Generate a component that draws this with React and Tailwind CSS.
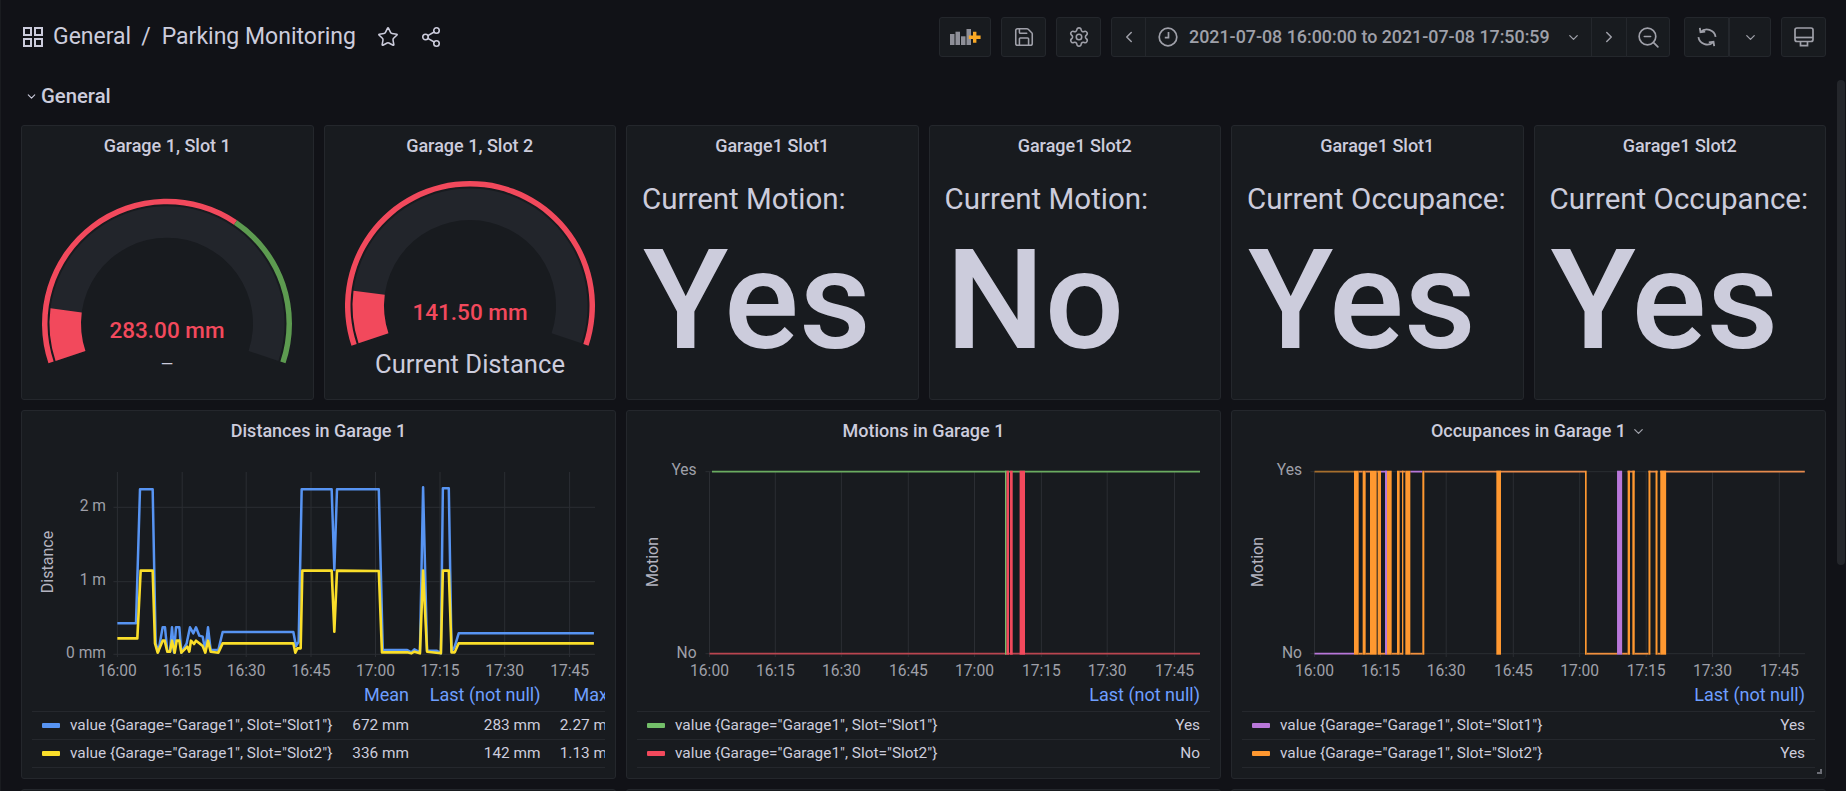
import React from "react";
import { ChevronDown, ChevronLeft, ChevronRight, Star, Share2, Settings, ZoomOut, Save } from "lucide-react";

const GREY = "#9fa0a9";
const GRID = "#2b2e33";

function polar(cx, cy, r, a) {
  const t = (a * Math.PI) / 180;
  return [cx + r * Math.cos(t), cy + r * Math.sin(t)];
}
function band(cx, cy, r0, r1, a0, a1) {
  const large = a1 - a0 > 180 ? 1 : 0;
  const [x0, y0] = polar(cx, cy, r1, a0);
  const [x1, y1] = polar(cx, cy, r1, a1);
  const [x2, y2] = polar(cx, cy, r0, a1);
  const [x3, y3] = polar(cx, cy, r0, a0);
  return `M${x0} ${y0}A${r1} ${r1} 0 ${large} 1 ${x1} ${y1}L${x2} ${y2}A${r0} ${r0} 0 ${large} 0 ${x3} ${y3}Z`;
}

function Gauge({ cx, cy, thresholds, value, sub, subSize, subY, valueY }) {
  const A0 = 161.5;
  const A1 = 378.5;
  return (
    <svg width="290" height="232" viewBox="0 42 290 232" className="block self-center">
      {thresholds.map(([a, b, c]) => (
        <path key={c} d={band(cx, cy, 119.5, 125, A0 + a * 217, A0 + b * 217)} fill={c} />
      ))}
      <path d={band(cx, cy, 86, 117.5, A0, A1)} fill="#22252b" />
      <path d={band(cx, cy, 86, 117.5, A0, A0 + 26)} fill="#f2495c" />
      <text x={cx} y={valueY} textAnchor="middle" fill="#f2495c" fontSize="22.5" fontWeight="500">{value}</text>
      <text x={cx} y={subY} textAnchor="middle" fill="#ccccdc" fontSize={subSize}>{sub}</text>
    </svg>
  );
}

function Panel({ title, children, chevron, className = "" }) {
  return (
    <div className={`flex flex-col overflow-hidden rounded-[3px] border border-[#24272c] bg-[#181b1f] ${className}`}>
      <div className="flex h-[41px] shrink-0 items-center justify-center pb-[2px] text-[18px] font-medium text-[#ccccdc]">
        <span className="relative">
          {title}
          {chevron && <ChevronDown size={15} color={GREY} className="absolute left-full top-[7px] ml-[5px]" />}
        </span>
      </div>
      {children}
    </div>
  );
}

function Stat({ title, label, value }) {
  return (
    <Panel title={title} className="h-[275px]">
      <div className="pl-[15px] pt-[10px] text-[29.5px] leading-[44px] text-[#ccccdc] whitespace-nowrap">{label}</div>
      <div className="mt-[4px] pl-[16px] text-[140px] leading-[150px] font-medium text-[#ccccdc]">{value}</div>
    </Panel>
  );
}

const TIMES = ["16:00", "16:15", "16:30", "16:45", "17:00", "17:15", "17:30", "17:45"];

function Chart({ px, xs, endX, yLabels, hLines, axisTitle, axisX, labelX, children }) {
  return (
    <svg width="593" height="228" viewBox={`${px + 1} 452 593 228`} className="block shrink-0">
      {xs.map((x) => (
        <line key={x} x1={x} x2={x} y1={472} y2={657} stroke={GRID} strokeWidth="1" />
      ))}
      {hLines.map((y) => (
        <line key={y} x1={xs[0] - 4} x2={endX} y1={y} y2={y} stroke={GRID} strokeWidth="1" />
      ))}
      {children}
      {TIMES.map((t, i) => (
        <text key={t} x={xs[i]} y={676} textAnchor="middle" fill={GREY} fontSize="15.6">{t}</text>
      ))}
      {yLabels.map(([t, y]) => (
        <text key={t} x={labelX} y={y + 4.5} textAnchor="end" fill={GREY} fontSize="15.6">{t}</text>
      ))}
      <text transform={`translate(${axisX} 562) rotate(-90)`} textAnchor="middle" fill="#b3b3bf" fontSize="16" y="5">{axisTitle}</text>
    </svg>
  );
}

function Legend({ rows, columns, grid }) {
  return (
    <div className="mx-[10px] overflow-hidden">
      <div className={`grid ${grid} h-[31px] items-center pb-[2px] text-[18px] text-[#6e9fff] whitespace-nowrap`}>
        <span />
        {columns.map((c) => (
          <span key={c} className={c === "Max" ? "pl-[33px]" : "text-right"}>{c}</span>
        ))}
      </div>
      {rows.map((r) => (
        <div key={r.name} className={`grid ${grid} h-[28px] items-center border-t border-[#25282d] text-[15.4px] text-[#ccccdc] whitespace-nowrap`}>
          <span className="flex items-center gap-[10px] pl-[10px]">
            <i className="block h-[5px] w-[18px] shrink-0 rounded-[1px]" style={{ background: r.color }} />
            {r.name}
          </span>
          {r.values.map((v, i) => (
            <span key={i} className="text-right">{v}</span>
          ))}
        </div>
      ))}
      <div className="border-t border-[#25282d]" />
    </div>
  );
}

const z11 = (pts) => pts.map(([x, y]) => `${90 + x / 3},${470 + y / 3}`);
const z3 = (pts) => pts.map(([x, y]) => `${x / 2.529},${400 + y / 3}`);

const BLUE = [
  ...z11([[82,460],[138,460],[150,58],[188,58],[197,520],[205,545],[218,472],[225,472],[232,545],[240,545],[246,472],[252,548],[258,472],[268,472],[274,548],[290,520],[300,472],[310,490],[318,472],[328,497],[338,500],[346,540],[354,472],[362,540],[385,540],[398,486],[610,486],[618,528],[626,515],[635,58],[725,58],[733,300],[741,58]]),
  ...z3([[958,268],[968,750],[1030,750],[1040,757],[1048,748],[1062,757],[1070,262],[1080,752],[1105,752],[1115,760],[1120,265],[1135,265],[1142,755],[1150,740],[1160,700],[1502,700]]),
].join(" ");
const YELLOW = [
  ...z11([[82,505],[142,505],[152,302],[188,302],[195,520],[203,548],[218,512],[224,512],[232,545],[240,545],[246,512],[254,548],[260,512],[268,512],[274,548],[292,530],[298,545],[303,512],[312,522],[318,512],[328,520],[338,528],[346,548],[354,512],[362,545],[385,548],[398,520],[610,520],[616,548],[622,535],[632,535],[637,302],[725,302],[733,485],[741,302]]),
  ...z3([[958,513],[966,757],[1030,757],[1040,760],[1048,755],[1062,760],[1070,512],[1080,755],[1115,760],[1120,512],[1135,512],[1142,757],[1150,757],[1160,730],[1502,730]]),
].join(" ");

const X1 = [117.4, 182.2, 246.2, 311, 375.5, 440, 504.7, 569.6];
const X2 = [709.5, 775.3, 841.4, 908.3, 974.5, 1041.4, 1107.2, 1174.5];
const X3 = [1314.5, 1380.5, 1446.2, 1513.3, 1579.7, 1646.2, 1712.5, 1779.3];
const YES = 471.7;
const NO = 653.7;

const z12 = (x) => 1300 + x / 3;
const z5 = (x) => 1230 + x / 2.545;
const ORANGE_BARS = [
  [z12(162), z12(176)], [z12(188), z12(197)], [z12(210), z12(230)], [z12(233), z12(243)],
  [z12(261), z12(275)], [z12(291), z12(299)], [z12(306), z12(310)], [z12(316), z12(331)],
  [z12(367), z12(373)], [z12(589), z12(603)], [z12(855), z12(860)],
  [z5(1012), z5(1018)], [z5(1024), z5(1030)], [z5(1065), z5(1070)], [z5(1083), z5(1088)], [z5(1095), z5(1110)],
];
const O_TOP = [[z12(176), z12(188)], [z12(197), z12(210)], [z12(230), z12(233)], [z12(299), z12(316)], [z12(373), z12(855)], [z5(1012), z5(1030)], [z5(1065), z5(1088)], [z5(1095), 1804.8]];
const P_TOP = [[z12(243), z12(261)], [z12(331), z12(367)]];
const O_BOT = [[z12(176), z12(188)], [z12(197), z12(210)], [z12(243), z12(255)], [z12(275), z12(291)], [z12(299), z12(306)], [z12(331), z12(367)], [z12(860), z5(985)], [z5(998), z5(1012)], [z5(1030), z5(1065)], [z5(1088), z5(1095)]];

const Seg = ({ x0, x1, y, c, w = 1.8 }) => <line x1={x0} x2={x1} y1={y} y2={y} stroke={c} strokeWidth={w} />;
const Bar = ({ x0, x1, c }) => <rect x={x0} width={x1 - x0} y={YES - 1} height={NO - YES + 2} fill={c} />;

const Btn = ({ w, children, className = "" }) => (
  <div className={`flex h-10 items-center justify-center border border-[#24272c] bg-[#181b1f] ${w} ${className}`}>{children}</div>
);

const AddPanelIcon = () => (
  <svg width="31" height="16" viewBox="0 0 31 16">
    <rect x="0" y="5" width="4.5" height="11" fill="#8e8f98" />
    <rect x="5.5" y="2.7" width="4.5" height="13.3" fill="#8e8f98" />
    <rect x="11" y="7.3" width="4.5" height="8.7" fill="#8e8f98" />
    <rect x="16.5" y="0" width="4.5" height="16" fill="#8e8f98" />
    <path d="M23 2.8h3.4v3.8h4.2V10h-4.2v3.8H23V10h-4.2V6.6H23z" fill="#f9a825" />
  </svg>
);
const ClockIcon = () => (
  <svg width="20" height="20" viewBox="0 0 20 20" fill="none" stroke={GREY} strokeWidth="1.7">
    <circle cx="10" cy="10" r="8.8" />
    <path d="M10.5 5v5.6H6.8" />
  </svg>
);
const SyncIcon = () => (
  <svg width="20" height="20" viewBox="0 0 20 20" fill="none" stroke={GREY} strokeWidth="1.8">
    <path d="M2.8.8l.7 4.4 4.7-.6" />
    <path d="M3.5 5.2A8.8 8.8 0 0 1 18.6 9.8" />
    <path d="M17.2 19.2l-.7-4.4-4.7.6" />
    <path d="M16.5 14.8A8.8 8.8 0 0 1 1.4 10.2" />
  </svg>
);
const MonitorIcon = () => (
  <svg width="20" height="20" viewBox="0 0 20 20" fill="none" stroke={GREY} strokeWidth="1.7">
    <rect x="1" y="1" width="18" height="13.5" rx="2" />
    <path d="M1 10.5h18" />
    <path d="M6.5 14.5v4.2h7v-4.2" />
  </svg>
);
const AppsIcon = () => (
  <svg width="20" height="20" viewBox="0 0 20 20" fill="none" stroke="#ccccdc" strokeWidth="2">
    <rect x="1" y="1" width="7" height="7" />
    <rect x="12" y="1" width="7" height="7" />
    <rect x="1" y="12" width="7" height="7" />
    <rect x="12" y="12" width="7" height="7" />
  </svg>
);

const name1 = 'value {Garage="Garage1", Slot="Slot1"}';
const name2 = 'value {Garage="Garage1", Slot="Slot2"}';

export default function App() {
  return (
    <div className="relative flex h-[791px] w-[1846px] flex-col overflow-hidden border-l border-[#1a1c20] bg-[#111217] font-[Roboto,sans-serif]">
      <header className="flex h-10 mt-[17px] items-center justify-between pl-[22px] pr-[20px]">
        <div className="flex items-center text-[23px] text-[#ccccdc]">
          <AppsIcon />
          <span className="ml-[10px]">General</span>
          <span className="mx-[10px]">/</span>
          <span className="ml-[1px]">Parking Monitoring</span>
          <Star size={22} strokeWidth={1.7} className="ml-[21px]" />
          <Share2 size={22} strokeWidth={1.7} className="ml-[21px]" />
        </div>
        <div className="flex items-center">
          <Btn w="w-[52px]" className="rounded-[3px]"><AddPanelIcon /></Btn>
          <Btn w="w-[45px]" className="ml-[10px] rounded-[3px]"><Save size={22} color={GREY} strokeWidth={1.7} /></Btn>
          <Btn w="w-[45px]" className="ml-[10px] rounded-[3px]"><Settings size={22} color={GREY} strokeWidth={1.7} /></Btn>
          <Btn w="w-[35px]" className="ml-[10px] rounded-l-[3px]"><ChevronLeft size={18} color={GREY} /></Btn>
          <Btn w="w-[447px]" className="-ml-px justify-start pl-[12px] text-[17.85px] font-medium text-[#9fa0a9]">
            <ClockIcon />
            <span className="ml-[11px] whitespace-nowrap">2021-07-08 16:00:00 to 2021-07-08 17:50:59</span>
            <ChevronDown size={15} className="ml-[16px]" />
          </Btn>
          <Btn w="w-[36px]" className="-ml-px"><ChevronRight size={18} color={GREY} /></Btn>
          <Btn w="w-[44px]" className="-ml-px rounded-r-[3px]"><ZoomOut size={25} color={GREY} strokeWidth={1.6} /></Btn>
          <Btn w="w-[45px]" className="ml-[14px] rounded-l-[3px]"><SyncIcon /></Btn>
          <Btn w="w-[42px]" className="rounded-r-[3px]"><ChevronDown size={15} color={GREY} /></Btn>
          <Btn w="w-[45px]" className="ml-[10px] rounded-[3px]"><MonitorIcon /></Btn>
        </div>
      </header>

      <div className="mt-[26px] flex h-[26px] items-center pl-[24px] text-[20.3px] font-medium text-[#ccccdc]">
        <ChevronDown size={13} color="#ccccdc" className="mr-[3px]" />
        <span>General</span>
      </div>

      <main className="mt-[16px] grid grid-cols-6 gap-[10px] pl-[20px] pr-[20px]">
        <Panel title="Garage 1, Slot 1" className="h-[275px]">
          <Gauge cx={145} cy={198.7} value="283.00 mm" sub="—" subSize="16" subY={245} valueY={213}
            thresholds={[[0, 0.657, "#f2495c"], [0.657, 1, "#5d9b50"]]} />
        </Panel>
        <Panel title="Garage 1, Slot 2" className="h-[275px]">
          <Gauge cx={145} cy={181} value="141.50 mm" sub="Current Distance" subSize="25.6" subY={248} valueY={195}
            thresholds={[[0, 1, "#f2495c"]]} />
        </Panel>
        <Stat title="Garage1 Slot1" label="Current Motion:" value="Yes" />
        <Stat title="Garage1 Slot2" label="Current Motion:" value="No" />
        <Stat title="Garage1 Slot1" label="Current Occupance:" value="Yes" />
        <Stat title="Garage1 Slot2" label="Current Occupance:" value="Yes" />

        <Panel title="Distances in Garage 1" className="col-span-2 h-[369px]">
          <Chart px={21} xs={X1} endX={595} hLines={[507.3, 581.7, 654.3]} axisTitle="Distance" axisX={47.5} labelX={106}
            yLabels={[["2 m", 506], ["1 m", 580], ["0 mm", 653]]}>
            <polyline points={BLUE} fill="none" stroke="#5794f2" strokeWidth="2.5" strokeLinejoin="round" />
            <polyline points={YELLOW} fill="none" stroke="#fade2a" strokeWidth="2.6" strokeLinejoin="round" />
          </Chart>
          <Legend grid="grid-cols-[297px_80px_131.5px_80px]" columns={["Mean", "Last (not null)", "Max"]}
            rows={[
              { name: name1, color: "#5794f2", values: ["672 mm", "283 mm", "2.27 mm"] },
              { name: name2, color: "#fade2a", values: ["336 mm", "142 mm", "1.13 mm"] },
            ]} />
        </Panel>

        <Panel title="Motions in Garage 1" className="col-span-2 h-[369px]">
          <Chart px={626} xs={X2} endX={1200} hLines={[YES, NO]} axisTitle="Motion" axisX={653} labelX={696.6}
            yLabels={[["Yes", 470], ["No", 653]]}>
            <Seg x0={712} x1={1200} y={YES} c="#6aac60" />
            <Seg x0={709.5} x1={1200} y={NO} c="#b9454f" />
            <Bar x0={1005} x1={1006.5} c="#73bf69" />
            <Bar x0={1006.5} x1={1009} c="#f2495c" />
            <Bar x0={1010} x1={1012.7} c="#f2495c" />
            <Bar x0={1019.6} x1={1025} c="#f2495c" />
          </Chart>
          <Legend grid="grid-cols-[1fr_auto] pr-[10px]" columns={["Last (not null)"]}
            rows={[
              { name: name1, color: "#73bf69", values: ["Yes"] },
              { name: name2, color: "#f2495c", values: ["No"] },
            ]} />
        </Panel>

        <Panel title="Occupances in Garage 1" chevron className="relative col-span-2 h-[369px]">
          <Chart px={1231} xs={X3} endX={1805} hLines={[YES, NO]} axisTitle="Motion" axisX={1257.5} labelX={1302}
            yLabels={[["Yes", 470], ["No", 653]]}>
            <Seg x0={1314.5} x1={z12(162)} y={YES} c="#a66f2d" />
            <Seg x0={1314.5} x1={z12(162)} y={NO} c="#b877d9" />
            {P_TOP.map(([a, b]) => <Seg key={a} x0={a} x1={b} y={YES} c="#b877d9" />)}
            {O_TOP.map(([a, b]) => <Seg key={a} x0={a} x1={b} y={YES} c="#e58a4c" />)}
            {O_BOT.map(([a, b]) => <Seg key={a} x0={a} x1={b} y={NO} c="#f0903e" />)}
            <Bar x0={z12(255)} x1={z12(261)} c="#b877d9" />
            <Bar x0={z5(985)} x1={z5(998)} c="#b877d9" />
            {ORANGE_BARS.map(([a, b]) => <Bar key={a} x0={a} x1={b} c="#ff9830" />)}
          </Chart>
          <Legend grid="grid-cols-[1fr_auto] pr-[10px]" columns={["Last (not null)"]}
            rows={[
              { name: name1, color: "#b877d9", values: ["Yes"] },
              { name: name2, color: "#ff9830", values: ["Yes"] },
            ]} />
          <div className="absolute bottom-[4px] right-[3px] h-[5px] w-[5px] border-b-2 border-r-2 border-[#6c6e76]" />
        </Panel>

        <div className="col-span-2 h-[40px] rounded-[3px] border border-[#24272c] bg-[#181b1f]" />
        <div className="col-span-2 h-[40px] rounded-[3px] border border-[#24272c] bg-[#181b1f]" />
        <div className="col-span-2 h-[40px] rounded-[3px] border border-[#24272c] bg-[#181b1f]" />
      </main>

      <div className="absolute right-[1px] top-[80px] h-[485px] w-[8px] rounded-[4px] bg-[#24262b]" />
    </div>
  );
}
